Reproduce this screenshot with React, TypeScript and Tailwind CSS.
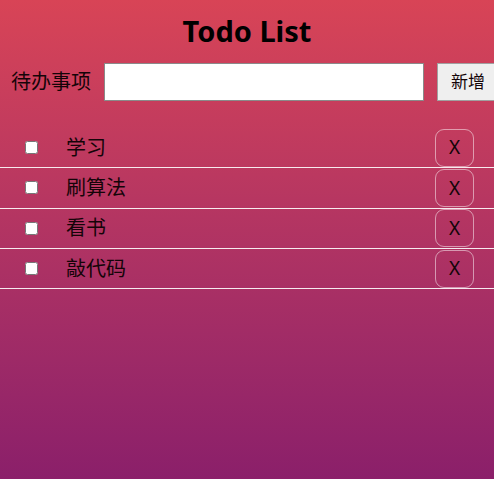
import { useState } from "react";

const initial = ["学习", "刷算法", "看书", "敲代码"];

export default function App() {
  const [todos, setTodos] = useState(initial.map((t) => ({ text: t, done: false })));
  const [value, setValue] = useState("");

  return (
    <div
      className="h-[479px] w-full overflow-hidden bg-gradient-to-b from-[#d84456] to-[#8b1f6a] text-[#140408]"
      style={{ fontFamily: '"Noto Sans", "Noto Sans CJK SC", sans-serif' }}
    >
      <h1 className="pt-[10px] text-center text-[29px] font-bold leading-[42px] text-black">Todo List</h1>
      <div className="mt-[11px] flex h-[38px] items-center whitespace-nowrap pl-[11px]">
        <label className="text-[20px] leading-none">待办事项</label>
        <input
          value={value}
          onChange={(e) => setValue(e.target.value)}
          className="ml-[13px] h-[38px] w-[320px] shrink-0 border border-[#8a8a8a] bg-white px-2 text-[18px] outline-none"
        />
        <button className="ml-[13px] h-[38px] w-[70px] shrink-0 border border-[#a0a0a0] bg-[#efefef] pl-[13px] text-left text-[17px]">
          新增
        </button>
      </div>
      <ul className="mt-[27px]">
        {todos.map((t, i) => (
          <li key={i} className="flex h-[40.3px] items-center border-b border-white/90">
            <input
              type="checkbox"
              checked={t.done}
              onChange={() =>
                setTodos(todos.map((x, j) => (j === i ? { ...x, done: !x.done } : x)))
              }
              className="ml-[25px] h-[13px] w-[13px]"
            />
            <span className="ml-[28px] flex-1 text-[20px]">{t.text}</span>
            <button
              onClick={() => setTodos(todos.filter((_, j) => j !== i))}
              className="mr-[20px] flex h-[38px] w-[39px] items-center justify-center rounded-[9px] border border-white/50 text-[19px]"
            >
              X
            </button>
          </li>
        ))}
      </ul>
    </div>
  );
}
